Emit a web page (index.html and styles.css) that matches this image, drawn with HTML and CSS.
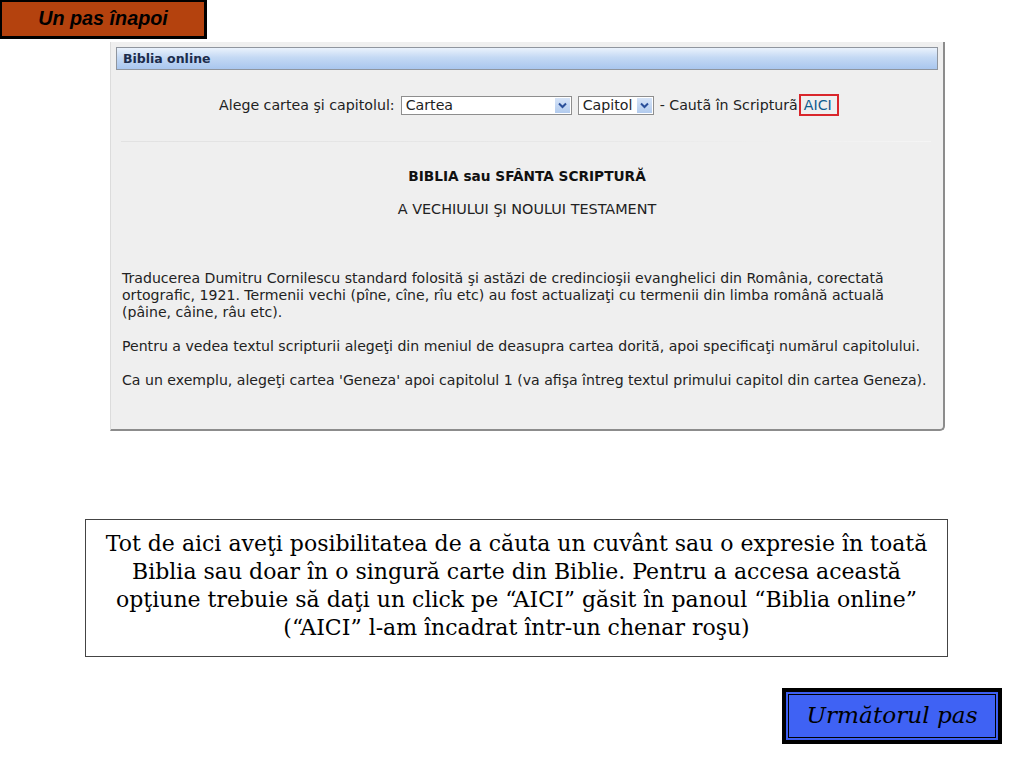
FILE: index.html
```html
<!DOCTYPE html>
<html lang="ro">
<head>
<meta charset="utf-8">
<title>Biblia online</title>
<link rel="stylesheet" href="styles.css">
</head>
<body>
<div class="back-btn">Un pas înapoi</div>

<div class="panel">
  <div class="panel-head">Biblia online</div>
  <div class="picker">
    <span>Alege cartea şi capitolul:</span>
    <span class="select select-book"><span class="sel-text">Cartea</span><span class="sel-arrow"><svg width="9" height="7" viewBox="0 0 9 7"><path d="M1 1.5 L4.5 5 L8 1.5" fill="none" stroke="#2a4f9a" stroke-width="2"/></svg></span></span>
    <span class="select select-ch"><span class="sel-text">Capitol</span><span class="sel-arrow"><svg width="9" height="7" viewBox="0 0 9 7"><path d="M1 1.5 L4.5 5 L8 1.5" fill="none" stroke="#2a4f9a" stroke-width="2"/></svg></span></span>
    <span>- Cautã în Scripturã</span><span class="aici">AICI</span>
  </div>
  <div class="rule"></div>
  <div class="title">BIBLIA sau SFÂNTA SCRIPTURĂ</div>
  <div class="subtitle">A VECHIULUI ŞI NOULUI TESTAMENT</div>
  <p class="para first">Traducerea Dumitru Cornilescu standard folosită şi astăzi de credincioşii evanghelici din România, corectată<br>ortografic, 1921. Termenii vechi (pîne, cîne, rîu etc) au fost actualizaţi cu termenii din limba română actuală<br>(pâine, câine, râu etc).</p>
  <p class="para">Pentru a vedea textul scripturii alegeţi din meniul de deasupra cartea dorită, apoi specificaţi numărul capitolului.</p>
  <p class="para">Ca un exemplu, alegeţi cartea 'Geneza' apoi capitolul 1 (va afişa întreg textul primului capitol din cartea Geneza).</p>
</div>

<div class="note">Tot de aici aveţi posibilitatea de a căuta un cuvânt sau o expresie în toată<br>Biblia sau doar în o singură carte din Biblie. Pentru a accesa această<br>opţiune trebuie să daţi un click pe “AICI” găsit în panoul “Biblia online”<br>(“AICI” l-am încadrat într-un chenar roşu)</div>

<div class="next-row">
  <div class="next-btn"><span class="next-inner">Următorul pas</span></div>
</div>
</body>
</html>
```

FILE: styles.css
```css
html, body {
  margin: 0;
  padding: 0;
  background: #ffffff;
}

body {
  width: 1024px;
  height: 768px;
  overflow: hidden;
  font-family: "Liberation Serif", "Times New Roman", serif;
}

.back-btn {
  box-sizing: border-box;
  width: 207px;
  height: 39px;
  background: #b4420e;
  border: 2px solid #000;
  border-right-width: 3px;
  border-bottom-width: 3px;
  font-family: "Liberation Sans", Arial, sans-serif;
  font-weight: bold;
  font-style: italic;
  font-size: 19.8px;
  color: #000;
  text-align: center;
  line-height: 32px;
}

.panel {
  box-sizing: border-box;
  margin: 3px 0 0 110px;
  width: 835px;
  height: 389px;
  background: #efefef;
  border-left: 1px solid #dcdcdc;
  border-right: 2px solid #8c8c8c;
  border-bottom: 2px solid #8c8c8c;
  border-bottom-right-radius: 5px;
  padding: 5px 0 0 5px;
  font-family: "DejaVu Sans", Verdana, sans-serif;
  font-size: 14.1px;
  color: #222;
}

.panel-head {
  box-sizing: border-box;
  width: 822px;
  height: 23px;
  border: 1px solid #8f959e;
  background: linear-gradient(#eaf2fc, #c4d9f4 45%, #a9c6ee);
  font-weight: bold;
  font-size: 12.5px;
  color: #1c2c4c;
  padding-left: 6px;
  line-height: 21px;
}

.picker {
  display: flex;
  align-items: center;
  margin: 24px 0 0 103px;
  height: 22px;
  font-size: 14.2px;
  color: #222;
  gap: 6px;
}

.select {
  box-sizing: border-box;
  display: flex;
  align-items: center;
  height: 19px;
  border: 1px solid #8e8e8e;
  background: #fff;
  padding: 0 1px 0 4px;
}

.select-book { width: 171px; }
.select-ch { width: 76px; }

.sel-text { flex: 1; }

.sel-arrow {
  display: flex;
  align-items: center;
  justify-content: center;
  width: 15px;
  height: 15px;
  background: linear-gradient(#d6e4f8, #b2cbee);
}

.aici {
  box-sizing: border-box;
  margin-left: -5px;
  height: 22px;
  line-height: 18px;
  border: 2px solid #d9262b;
  padding: 0 5px 0 3px;
  color: #0f5c8e;
}

.rule {
  margin: 25px 0 0 5px;
  width: 810px;
  height: 1px;
  background: linear-gradient(90deg, #e2e2e2, #e8e8e8 60%, #f5f5f5);
}

.title {
  margin-top: 26px;
  text-align: center;
  font-weight: bold;
  font-size: 13.7px;
  color: #111;
  padding-right: 5px;
}

.subtitle {
  margin-top: 17px;
  text-align: center;
  font-size: 14.4px;
  color: #222;
  padding-right: 5px;
}

.para {
  margin: 17px 0 0 6px;
  width: 820px;
  line-height: 17px;
  white-space: nowrap;
}

.para.first { margin-top: 53px; }

.note {
  box-sizing: border-box;
  margin: 88px 0 0 85px;
  width: 863px;
  height: 138px;
  border: 1px solid #444;
  background: #fff;
  padding: 10px 0 0;
  text-align: center;
  font-family: "DejaVu Serif", Georgia, serif;
  font-size: 22px;
  line-height: 28px;
  color: #000;
  white-space: nowrap;
}

.next-row {
  display: flex;
  justify-content: flex-end;
  padding-right: 22px;
  margin-top: 31px;
}

.next-btn {
  box-sizing: border-box;
  width: 220px;
  height: 56px;
  background: #000;
  padding: 4px;
}

.next-inner {
  box-sizing: border-box;
  display: block;
  height: 100%;
  border: 1px solid #3d5df0;
  outline: 1px solid #000;
  outline-offset: -3px;
  background: #3f62f4;
  text-align: center;
  font-family: "DejaVu Serif", Georgia, serif;
  font-style: italic;
  font-size: 23.2px;
  line-height: 44px;
  color: #000;
}
```
